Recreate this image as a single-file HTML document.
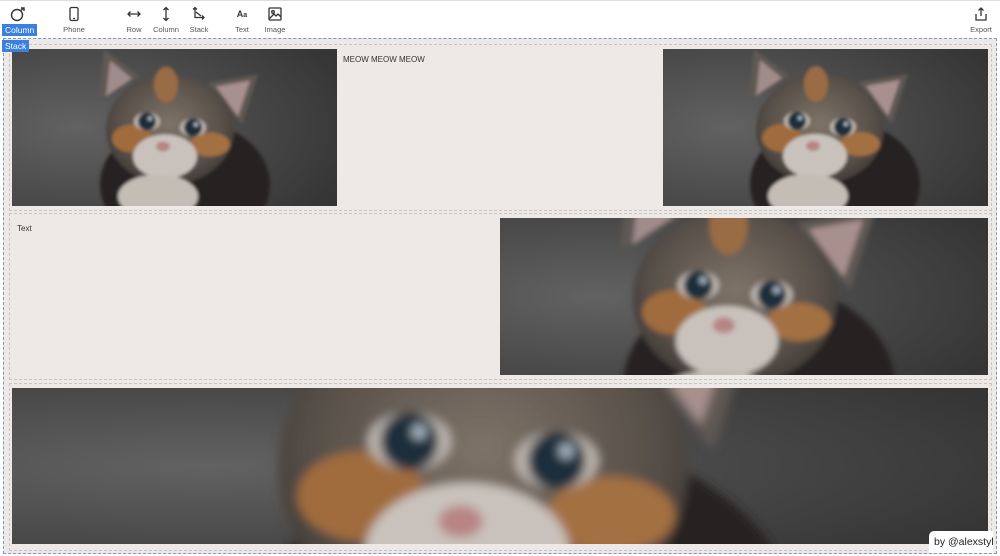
<!DOCTYPE html>
<html><head><meta charset="utf-8"><style>
*{margin:0;padding:0;box-sizing:border-box}
body{width:1000px;height:556px;overflow:hidden;background:#fff;font-family:"Liberation Sans",Arial,sans-serif;position:relative}
.tb{position:absolute;left:0;top:0;width:1000px;height:37px;background:#fff;border-top:1px solid #ddd}
.tool{position:absolute;top:5px;text-align:center;font-size:7.5px;color:#555;width:40px}
.tool svg{display:block;margin:0 auto 3px}
.canvas{position:absolute;left:3px;top:38px;width:994px;height:516px;background:#ede9e6;border:1px dashed #7b97c4}
.row{position:absolute;left:5px;width:983px;border:1px dashed #c9c3c0}
.img{position:absolute;overflow:hidden;background:#4a4a4a}
.img svg{position:absolute;left:0;top:0}
.t{position:absolute;font-size:8px;color:#333}
.tag{position:absolute;left:2px;background:#3b7fe0;color:#fff;font-size:8.5px;padding:1px 3px}
.by{position:absolute;left:929px;top:531px;background:#fff;border-radius:5px 0 0 0;font-size:10.5px;line-height:14px;color:#222;padding:4px 5px;width:64px;height:22px;white-space:nowrap;overflow:hidden}
</style></head><body>
<svg width="0" height="0" style="position:absolute">
<defs>
<filter id="bl" x="-50%" y="-50%" width="200%" height="200%"><feGaussianBlur stdDeviation="1.6"/></filter>
<radialGradient id="fur" cx="0.5" cy="0.45" r="0.6"><stop offset="0" stop-color="#7e7368"/><stop offset="0.7" stop-color="#574f48"/><stop offset="1" stop-color="#3a3532"/></radialGradient>
<radialGradient id="bgg" cx="0.2" cy="0.5" r="0.9"><stop offset="0" stop-color="#626262"/><stop offset="1" stop-color="#353535"/></radialGradient>
<symbol id="kit" overflow="visible">
<g filter="url(#bl)">
<ellipse cx="15" cy="60" rx="85" ry="65" fill="#262422"/>
<polygon points="-72,-25 -66,-75 -30,-48" fill="#5e5853"/>
<polygon points="-64,-28 -60,-64 -38,-46" fill="#a08c8a"/>
<polygon points="38,-42 88,-50 72,0" fill="#5e5853"/>
<polygon points="46,-38 80,-44 68,-8" fill="#a8908e"/>
<ellipse cx="0" cy="5" rx="64" ry="55" fill="url(#fur)"/>
<ellipse cx="-4" cy="-40" rx="12" ry="18" fill="#9a6c44"/>
<ellipse cx="-38" cy="14" rx="20" ry="14" fill="#a06c3e"/>
<ellipse cx="40" cy="20" rx="20" ry="12" fill="#a36f42"/>
<ellipse cx="-5" cy="32" rx="32" ry="22" fill="#c9c2bc"/>
<ellipse cx="-12" cy="72" rx="40" ry="22" fill="#c4bdb6"/>
<ellipse cx="-23" cy="-3" rx="13" ry="9" fill="#bdb6ae"/>
<ellipse cx="23" cy="3" rx="13" ry="9" fill="#bdb6ae"/>
<circle cx="-23" cy="-3" r="9" fill="#1d2f3a"/>
<circle cx="23" cy="3" r="9" fill="#1d2f3a"/>
<circle cx="-20" cy="-6" r="2.3" fill="#a8b8c4"/>
<circle cx="26" cy="0" r="2.3" fill="#a8b8c4"/>
<ellipse cx="-7" cy="22" rx="7" ry="5" fill="#b88484"/>
</g>
</symbol>
</defs></svg>

<div class="tb">
 <div class="tool" style="left:-2px;top:5px"><svg width="16" height="16" viewBox="0 0 16 16" fill="none" stroke="#333" stroke-width="1.4"><circle cx="7" cy="9" r="5.5"/><path d="M10.5 5 L13.5 2 M11 2h3v3"/></svg></div>
 <div class="tool" style="left:54px"><svg width="16" height="16" viewBox="0 0 16 16" fill="none" stroke="#333" stroke-width="1.3"><rect x="4" y="1.5" width="8" height="13" rx="1.5"/><path d="M7 12.5h2"/></svg>Phone</div>
 <div class="tool" style="left:114px"><svg width="16" height="16" viewBox="0 0 16 16" fill="none" stroke="#333" stroke-width="1.3"><path d="M2 8h12M4.5 5.5 2 8l2.5 2.5M11.5 5.5 14 8l-2.5 2.5"/></svg>Row</div>
 <div class="tool" style="left:146px"><svg width="16" height="16" viewBox="0 0 16 16" fill="none" stroke="#333" stroke-width="1.3"><path d="M8 1.5v13M5.5 4 8 1.5 10.5 4M5.5 12 8 14.5 10.5 12"/></svg>Column</div>
 <div class="tool" style="left:179px"><svg width="16" height="16" viewBox="0 0 16 16" fill="none" stroke="#333" stroke-width="1.3"><path d="M4 1.5v10h9M2 3.5 4 1.5 6 3.5M11 9.5l2 2-2 2M5 6l5 4"/></svg>Stack</div>
 <div class="tool" style="left:222px"><div style="font-size:9px;font-weight:bold;color:#333;height:19px;line-height:16px">A<span style="font-size:7px">a</span></div>Text</div>
 <div class="tool" style="left:255px"><svg width="16" height="16" viewBox="0 0 16 16" fill="none" stroke="#333" stroke-width="1.3"><rect x="2" y="2" width="12" height="12" rx="1"/><circle cx="6" cy="6" r="1.3"/><path d="M2.5 12.5 7 8l2 2 2-2 3 3"/></svg>Image</div>
 <div class="tool" style="left:961px"><svg width="16" height="16" viewBox="0 0 16 16" fill="none" stroke="#333" stroke-width="1.3"><path d="M8 10V2M5.5 4.5 8 2l2.5 2.5M3 8v6h10V8"/></svg>Export</div>
</div>

<div class="canvas">
 <div class="row" style="top:5px;height:167px"></div>
 <div class="row" style="top:174px;height:167px"></div>
 <div class="row" style="top:344px;height:168px"></div>
</div>

<div class="img" style="left:12px;top:49px;width:325px;height:157px"><svg width="325" height="157"><rect width="325" height="157" fill="url(#bgg)"/><g transform="translate(158,75.5)"><use href="#kit"/></g></svg></div>
<div class="t" style="left:343px;top:55px">MEOW MEOW MEOW</div>
<div class="img" style="left:663px;top:49px;width:325px;height:157px"><svg width="325" height="157"><rect width="325" height="157" fill="url(#bgg)"/><g transform="translate(157,75)"><use href="#kit"/></g></svg></div>

<div class="t" style="left:17px;top:224px">Text</div>
<div class="img" style="left:500px;top:218px;width:488px;height:157px"><svg width="488" height="157"><rect width="488" height="157" fill="url(#bgg)"/><g transform="translate(235,72) scale(1.6)"><use href="#kit"/></g></svg></div>

<div class="img" style="left:12px;top:388px;width:976px;height:156px"><svg width="976" height="156"><rect width="976" height="156" fill="url(#bgg)"/><g transform="translate(471,63) scale(3.2)"><use href="#kit"/></g></svg></div>

<div class="tag" style="top:24px">Column</div>
<div class="tag" style="top:40px">Stack</div>
<div class="by">by @alexstyl</div>
</body></html>
